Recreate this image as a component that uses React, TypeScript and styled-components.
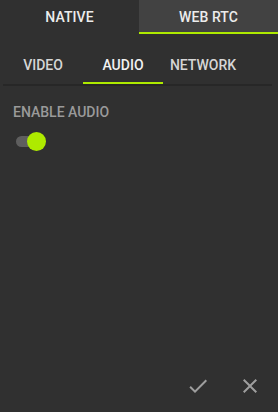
import React, { useState } from 'react';
import styled, { createGlobalStyle } from 'styled-components';

const GlobalStyle = createGlobalStyle`
  html, body {
    margin: 0;
    padding: 0;
    background: #303030;
  }
  body {
    font-family: Roboto, "Liberation Sans", sans-serif;
  }
`;

const Panel = styled.div`
  width: 278px;
  height: 412px;
  background: #303030;
  display: flex;
  flex-direction: column;
  box-sizing: border-box;
`;

const TopTabs = styled.div`
  display: flex;
  height: 34px;
`;

const TopTab = styled.div<{ $active?: boolean }>`
  flex: 1;
  display: flex;
  align-items: center;
  justify-content: center;
  box-sizing: border-box;
  padding-top: ${(p) => (p.$active ? '2px' : '0')};
  background: ${(p) => (p.$active ? '#424242' : '#303030')};
  border-bottom: ${(p) => (p.$active ? '2px solid #aeea00' : 'none')};
  color: #ececec;
  font-size: 14px;
  font-weight: 500;
  letter-spacing: 0.1px;
`;

const SubTabs = styled.div`
  display: flex;
  margin: 8px 6px 0 3px;
  border-bottom: 2px solid #272727;
`;

const SubTab = styled.div<{ $active?: boolean }>`
  width: 80px;
  height: 42px;
  box-sizing: border-box;
  display: flex;
  align-items: center;
  justify-content: center;
  padding-top: 6px;
  border-bottom: 2px solid ${(p) => (p.$active ? '#aeea00' : 'transparent')};
  color: ${(p) => (p.$active ? '#f2f2f2' : '#d6d6d6')};
  font-size: 14px;
  font-weight: 500;
`;

const Content = styled.div`
  flex: 1;
  padding: 18px 13px 0;
`;

const Label = styled.div`
  color: #9a9a9a;
  font-size: 14px;
  font-weight: 500;
  line-height: 16px;
`;

const Switch = styled.div<{ $on: boolean }>`
  position: relative;
  margin: 12px 0 0 3px;
  width: 28px;
  height: 19px;
  cursor: pointer;

  &::before {
    content: '';
    position: absolute;
    left: 0;
    top: 4px;
    width: 28px;
    height: 11px;
    border-radius: 6px;
    background: #5e5e5e;
  }

  &::after {
    content: '';
    position: absolute;
    top: 0;
    left: ${(p) => (p.$on ? '11px' : '0')};
    width: 19px;
    height: 19px;
    border-radius: 50%;
    background: ${(p) => (p.$on ? '#aeea00' : '#bdbdbd')};
  }
`;

const Footer = styled.div`
  display: flex;
  justify-content: flex-end;
  gap: 28px;
  padding: 0 16px 14px 0;
`;

const IconButton = styled.button`
  width: 24px;
  height: 24px;
  padding: 0;
  border: none;
  background: none;
  color: #9e9e9e;
  cursor: pointer;
  svg {
    display: block;
  }
`;

const App = () => {
  const [on, setOn] = useState(true);

  return (
    <>
      <GlobalStyle />
      <Panel>
        <TopTabs>
          <TopTab>NATIVE</TopTab>
          <TopTab $active>WEB RTC</TopTab>
        </TopTabs>
        <SubTabs>
          <SubTab>VIDEO</SubTab>
          <SubTab $active>AUDIO</SubTab>
          <SubTab>NETWORK</SubTab>
        </SubTabs>
        <Content>
          <Label>ENABLE AUDIO</Label>
          <Switch $on={on} onClick={() => setOn(!on)} />
        </Content>
        <Footer>
          <IconButton aria-label="apply">
            <svg width="24" height="24" viewBox="0 0 24 24" fill="currentColor">
              <path d="M9 16.17L4.83 12l-1.42 1.41L9 19 21 7l-1.41-1.41z" />
            </svg>
          </IconButton>
          <IconButton aria-label="close">
            <svg width="24" height="24" viewBox="0 0 24 24" fill="currentColor">
              <path d="M19 6.41L17.59 5 12 10.59 6.41 5 5 6.41 10.59 12 5 17.59 6.41 19 12 13.41 17.59 19 19 17.59 13.41 12z" />
            </svg>
          </IconButton>
        </Footer>
      </Panel>
    </>
  );
};

export default App;
